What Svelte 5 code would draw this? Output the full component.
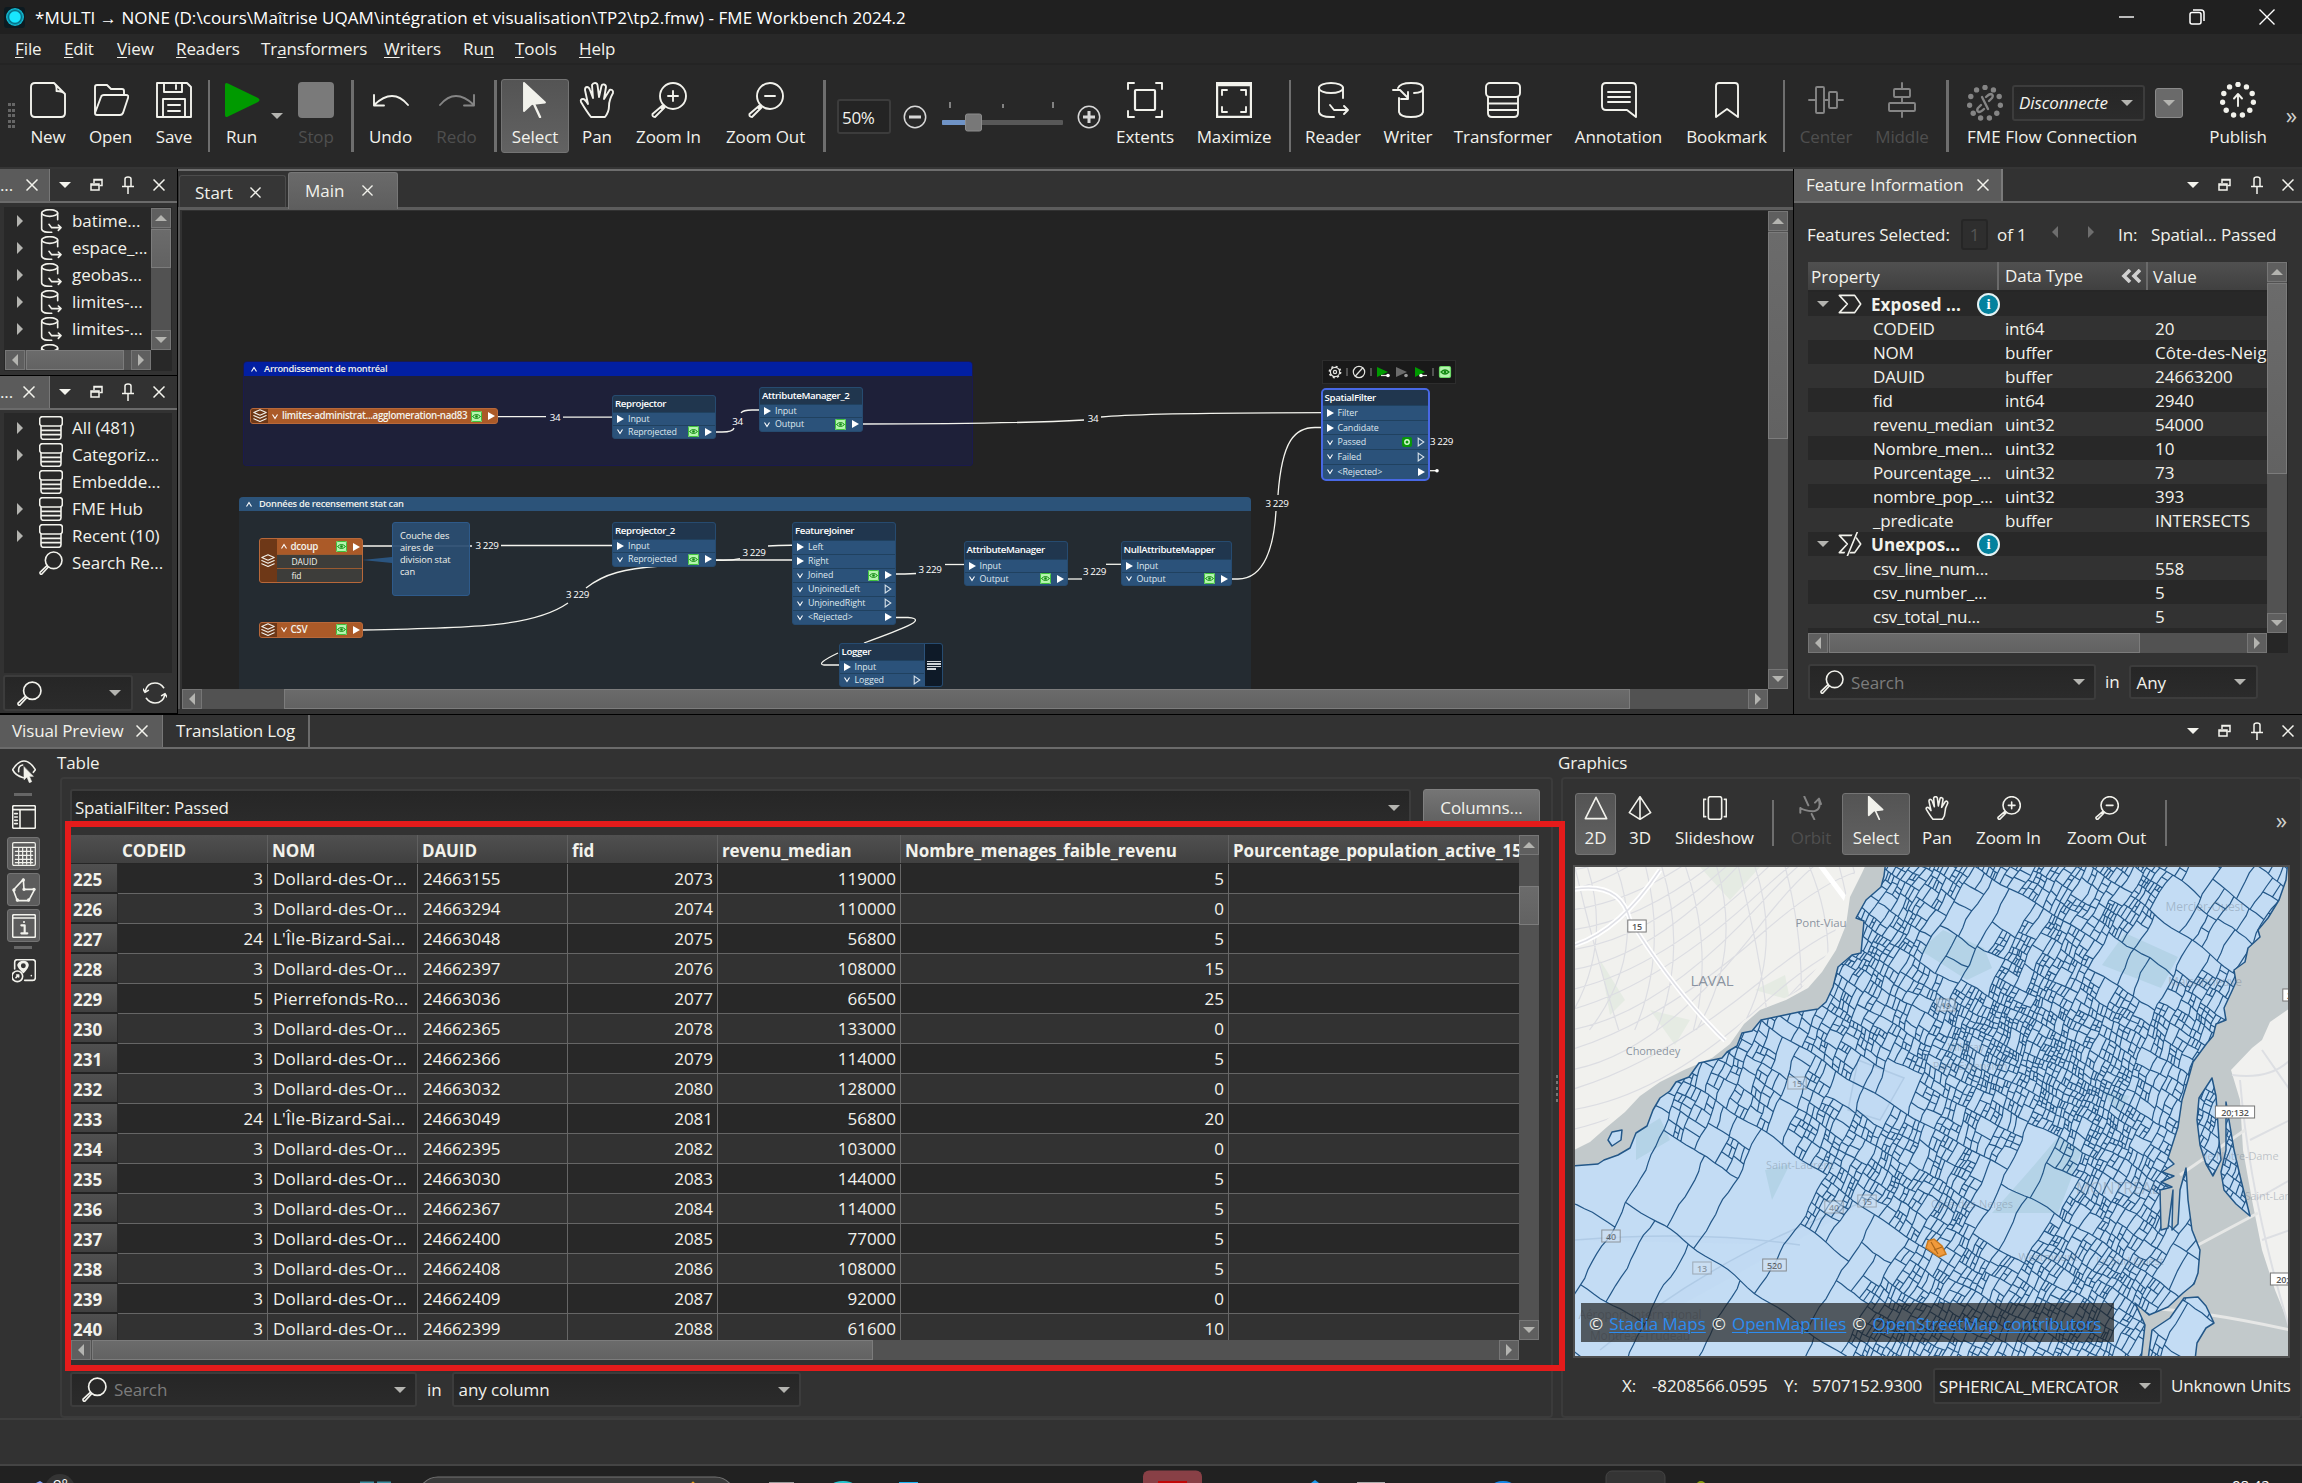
<script lang="ts">
  const menus = [
    ['', 'F', 'ile', 49], ['', 'E', 'dit', 53], ['', 'V', 'iew', 59], ['', 'R', 'eaders', 85],
    ['Tr', 'a', 'nsformers', 123], ['', 'W', 'riters', 79], ['Ru', 'n', '', 52], ['', 'T', 'ools', 64], ['', 'H', 'elp', 60]
  ];

  type Tool = { t: string; l?: string; w: number; cls?: string };
  const toolsA: Tool[] = [
    { t: 'new', l: 'New', w: 56 }, { t: 'open', l: 'Open', w: 69 }, { t: 'save', l: 'Save', w: 58 }, { t: 'sep', w: 12 },
    { t: 'run', l: 'Run', w: 53 }, { t: 'arrow', w: 17 }, { t: 'stop', l: 'Stop', w: 62, cls: 'off' }, { t: 'sep', w: 11 },
    { t: 'undo', l: 'Undo', w: 65 }, { t: 'redo', l: 'Redo', w: 67, cls: 'off' }, { t: 'sep', w: 11 },
    { t: 'select', l: 'Select', w: 68, cls: 'on' }, { t: 'pan', l: 'Pan', w: 56 }, { t: 'zin', l: 'Zoom In', w: 87 },
    { t: 'zout', l: 'Zoom Out', w: 107 }, { t: 'sep', w: 11 }
  ];
  const toolsB: Tool[] = [
    { t: 'extents', l: 'Extents', w: 74 }, { t: 'maximize', l: 'Maximize', w: 104 }, { t: 'sep', w: 8 },
    { t: 'reader', l: 'Reader', w: 78 }, { t: 'writer', l: 'Writer', w: 72 }, { t: 'transformer', l: 'Transformer', w: 118 },
    { t: 'annotation', l: 'Annotation', w: 113 }, { t: 'bookmark', l: 'Bookmark', w: 103 }, { t: 'sep', w: 12 },
    { t: 'center', l: 'Center', w: 72, cls: 'off' }, { t: 'middle', l: 'Middle', w: 80, cls: 'off' }, { t: 'sep', w: 11 }
  ];
  const toolsMap: Tool[] = [
    { t: 'tri2', l: '2D', w: 41, cls: 'on' }, { t: 'tri3', l: '3D', w: 48 }, { t: 'slides', l: 'Slideshow', w: 101 }, { t: 'sep', w: 15 },
    { t: 'orbit', l: 'Orbit', w: 62, cls: 'off' }, { t: 'select', l: 'Select', w: 68, cls: 'on' }, { t: 'pan', l: 'Pan', w: 54 },
    { t: 'zin', l: 'Zoom In', w: 89 }, { t: 'zout', l: 'Zoom Out', w: 107 }, { t: 'sep', w: 12 }
  ];

  const files = ['batime...', 'espace_...', 'geobas...', 'limites-...', 'limites-...', 'limites-...'];
  const gallery = [
    ['All (481)', true], ['Categoriz...', true], ['Embedde...', false], ['FME Hub', true], ['Recent (10)', true]
  ] as [string, boolean][];

  const props = [
    ['h', 'Exposed ...', '', ''], ['', 'CODEID', 'int64', '20'], ['', 'NOM', 'buffer', 'Côte-des-Neiges'],
    ['', 'DAUID', 'buffer', '24663200'], ['', 'fid', 'int64', '2940'], ['', 'revenu_median', 'uint32', '54000'],
    ['', 'Nombre_men...', 'uint32', '10'], ['', 'Pourcentage_...', 'uint32', '73'], ['', 'nombre_pop_...', 'uint32', '393'],
    ['', '_predicate', 'buffer', 'INTERSECTS'], ['x', 'Unexpos...', '', ''], ['', 'csv_line_num...', '', '558'],
    ['', 'csv_number_...', '', '5'], ['', 'csv_total_nu...', '', '5'], ['', '', '', '']
  ];

  const D = 'Dollard-des-Or...', I = "L'Île-Bizard-Sai...", P = 'Pierrefonds-Ro...';
  const rows = [
    [225, 3, D, 24663155, 2073, 119000, 5], [226, 3, D, 24663294, 2074, 110000, 0], [227, 24, I, 24663048, 2075, 56800, 5],
    [228, 3, D, 24662397, 2076, 108000, 15], [229, 5, P, 24663036, 2077, 66500, 25], [230, 3, D, 24662365, 2078, 133000, 0],
    [231, 3, D, 24662366, 2079, 114000, 5], [232, 3, D, 24663032, 2080, 128000, 0], [233, 24, I, 24663049, 2081, 56800, 20],
    [234, 3, D, 24662395, 2082, 103000, 0], [235, 3, D, 24663030, 2083, 144000, 5], [236, 3, D, 24662367, 2084, 114000, 5],
    [237, 3, D, 24662400, 2085, 77000, 5], [238, 3, D, 24662408, 2086, 108000, 5], [239, 3, D, 24662409, 2087, 92000, 0],
    [240, 3, D, 24662399, 2088, 61600, 10]
  ];

  // Workflow nodes. Port kinds: in = input, eye = cached output, out = solid output, open = unconnected output
  type Port = [string, string];
  type Node = { x: number; y: number; w: number; h: number; head: number; name: string; ports: Port[]; sel?: boolean; log?: boolean };
  const nodes: Node[] = [
    { x: 612, y: 394.5, w: 104, h: 44.5, head: 16, name: 'Reprojector', ports: [['Input', 'in'], ['Reprojected', 'eye']] },
    { x: 759, y: 387, w: 104, h: 44.5, head: 16, name: 'AttributeManager_2', ports: [['Input', 'in'], ['Output', 'eye']] },
    { x: 612, y: 522, w: 104, h: 44.5, head: 16, name: 'Reprojector_2', ports: [['Input', 'in'], ['Reprojected', 'eye']] },
    { x: 792, y: 522, w: 104, h: 102.5, head: 17, name: 'FeatureJoiner', ports: [['Left', 'in'], ['Right', 'in'], ['Joined', 'eye'], ['UnjoinedLeft', 'open'], ['UnjoinedRight', 'open'], ['<Rejected>', 'out']] },
    { x: 963.5, y: 541, w: 104, h: 45, head: 16.5, name: 'AttributeManager', ports: [['Input', 'in'], ['Output', 'eye']] },
    { x: 1120.5, y: 541, w: 111, h: 45, head: 16.5, name: 'NullAttributeMapper', ports: [['Input', 'in'], ['Output', 'eye']] },
    { x: 838.5, y: 642.5, w: 104, h: 44.5, head: 16, name: 'Logger', ports: [['Input', 'in'], ['Logged', 'open']], log: true },
    { x: 1320.5, y: 387.5, w: 109.5, h: 93, head: 15.5, name: 'SpatialFilter', ports: [['Filter', 'in'], ['Candidate', 'in'], ['Passed', 'cur'], ['Failed', 'open'], ['<Rejected>', 'out']], sel: true }
  ];
  const wires = [
    'M494 416.7H546', 'M563 417.2H617', 'M711 432H722Q733 432 734 428', 'M741 413Q743 410 752 410H768',
    'M860 424C960 424 1030 423 1084 420', 'M1101 417C1140 413 1240 412.7 1328 412.7',
    'M361 546H472', 'M501 545.5H617', 'M361 630C480 628 535 626 568 603', 'M586 588C605 573 625 569 660 566Q690 560 720 560H800',
    'M714 560Q730 561 740 558.7', 'M768 546Q780 545 800 545.3', 'M893 574Q905 574 916 573.5', 'M945 564.5H970',
    'M1064 579H1082', 'M1106 564.3H1130', 'M1228 579H1238C1265 579 1274 545 1276 511', 'M1278 495C1282 440 1295 427.5 1315 427.5H1328',
    'M893 617.5H908C930 619 900 630 864 643', 'M838 653Q815 664 824 665H845', 'M1421 470.7H1437'
  ];
  const counts = [
    [555, 417.5, '34'], [737.5, 421.7, '34'], [1093, 418.7, '34'], [487, 545.7, '3 229'], [754, 552.7, '3 229'],
    [577.5, 594.7, '3 229'], [930, 569.7, '3 229'], [1094.5, 571.7, '3 229'], [1277, 503.7, '3 229'], [1441.5, 441.7, '3 229']
  ] as [number, number, string][];

  // Street mesh: a skewed lattice split recursively, finer where the city is denser
  let seed = 77;
  const rnd = () => ((seed = (seed * 1103515245 + 12345) & 0x7fffffff) / 0x7fffffff);
  const near = (x: number, y: number, cx: number, cy: number, r: number) => Math.hypot(x - cx, y - cy) < r;
  function grain(x: number, y: number): number {
    if (near(x, y, 2028, 1190, 42)) return 60;
    if (near(x, y, 1960, 945, 36)) return 40;
    if (near(x, y, 2140, 962, 32)) return 48;
    if (near(x, y, 1872, 1090, 30)) return 42;
    if (near(x, y, 1990, 905, 26)) return 32;
    if (near(x, y, 1870, 1240, 34)) return 44;
    if (x < 1790 && y > 1190) return 110;
    if (x < 1720 && y > 1135) return 60;
    if (x < 1840 && y > 1225) return 60;
    if (x > 2165 && y < 970) return 24;
    if (x > 2165 && y > 1200) return 36;
    if (near(x, y, 2000, 1020, 70)) return 7;
    if (near(x, y, 2080, 1080, 65)) return 7.5;
    if (x < 1800) return 13;
    return 9.5;
  }
  const ua = [Math.cos(0.56), Math.sin(0.56)], ub = [Math.cos(-1.12), Math.sin(-1.12)];
  function place(a: number, b: number) {
    const x = 1930 + a * ua[0] + b * ub[0], y = 1110 + a * ua[1] + b * ub[1];
    return [
      x + 7 * Math.sin(y / 57) + 1.3 * Math.sin(a / 13 + b / 9) + 0.5 * Math.sin(b / 2.3),
      y + 6 * Math.sin(x / 71) + 1.2 * Math.sin(b / 14 - a / 11) + 0.5 * Math.sin(a / 2.9)
    ];
  }
  function edge(a0: number, b0: number, a1: number, b1: number) {
    const n = Math.max(1, Math.round(Math.hypot(a1 - a0, b1 - b0) / 9));
    let s = '';
    for (let i = 0; i <= n; i++) {
      const p = place(a0 + ((a1 - a0) * i) / n, b0 + ((b1 - b0) * i) / n);
      s += (i ? 'L' : 'M') + p[0].toFixed(1) + ' ' + p[1].toFixed(1);
    }
    return s;
  }
  let mesh = '';
  function split(a0: number, a1: number, b0: number, b1: number) {
    const [x, y] = place((a0 + a1) / 2, (b0 + b1) / 2);
    const w = a1 - a0, h = b1 - b0, r = w + h;
    if (x + r < 1575 || x - r > 2288 || y + r < 867 || y - r > 1356) return;
    const g = grain(x, y) * (0.6 + rnd() * rnd() * 1.9);
    if (w < g && h < g * 1.5) return;
    const k = 0.38 + rnd() * 0.24;
    if (w * 1.4 > h) {
      const m = a0 + w * k;
      mesh += edge(m, b0, m, b1);
      split(a0, m, b0, b1);
      split(m, a1, b0, b1);
    } else {
      const m = b0 + h * k;
      mesh += edge(a0, m, a1, m);
      split(a0, a1, b0, m);
      split(a0, a1, m, b1);
    }
  }
  split(-560, 560, -520, 520);

  const island = 'M1886 860L1884 876 1881 887 1866 900 1856 918 1864 921 1861 953 1852 955 1838 967 1833 987 1826 1002 1818 1009 1799 1012 1780 1016 1761 1020 1752 1031 1742 1033 1737 1046 1727 1052 1722 1058 1699 1063 1689 1077 1676 1082 1670 1091 1660 1098 1653 1110 1647 1126 1636 1133 1630 1148 1618 1155 1604 1160 1598 1164 1570 1166 1570 1360 2141 1360 2145 1325 2135 1303 2149 1315 2168 1307 2183 1293 2194 1284 2198 1273 2200 1250 2192 1230 2188 1200 2186 1168 2180 1190 2178 1224 2172 1230 2173 1190 2168 1228 2161 1230 2160 1190 2172 1187 2161 1182 2174 1176 2162 1172 2174 1164 2168 1158 2178 1127 2182 1100 2188 1080 2193 1062 2207 1043 2213 1036 2216 1024 2226 1020 2224 1008 2231 993 2236 982 2234 970 2245 962 2248 948 2260 937 2258 930 2268 918 2279 900 2286 880 2288 860Z';
  const isles = 'M2152 1330L2170 1318 2184 1298 2198 1297 2206 1306 2214 1323 2206 1328 2197 1343 2195 1360 2148 1360ZM2212 1078L2216 1096 2219 1140 2221 1160 2213 1176 2206 1164 2200 1145 2197 1120 2199 1098ZM2226 1102L2229 1120 2234 1150 2241 1180 2250 1216 2236 1204 2224 1190 2221 1172 2226 1150ZM1612 1132L1622 1130 1621 1140 1612 1146 1608 1140Z';
  let roads = '';
  for (let i = 0; i < 17; i++) {
    const x = 1560 + i * 24 + rnd() * 14;
    roads += `M${x} 860q${20 + rnd() * 20} 90 ${-30 + rnd() * 80} 170`;
    roads += `M1570 ${850 + i * 20}q90 ${-30 + rnd() * 20} 190 ${-150 + rnd() * 50}t140 -60`;
  }
  const districts = [
    [1821, 927, 'Pont-Viau', 11.5], [1712, 986, 'LAVAL', 15], [1653, 1055, 'Chomedey', 11], [2205, 911, 'Mercier-Ouest', 12],
    [2205, 986, 'Maisonneuve', 12], [1966, 1051, 'Villeray', 11], [1970, 1070, 'Parc-Extension', 11], [1800, 1169, 'Saint-Laurent', 11],
    [2118, 1194, 'MONTRÉAL', 16], [1972, 1208, 'Côte-des-Neiges', 11], [2048, 1261, 'Westmount', 11], [2130, 1265, 'Le Sud-Ouest', 11],
    [2240, 1160, 'Île Notre-Dame', 11], [2280, 1200, 'Saint-Lambert', 11], [1640, 1319, 'Aéroport international', 12], [1640, 1340, 'Montréal-Trudeau', 12]
  ] as [number, number, string, number][];
  const shields = [
    [1637, 926, '15', 1], [1611, 1236, '40', 0.7], [1702, 1268, '13', 0.5], [1774.5, 1265, '520', 0.8], [1834, 1207, '40', 0.5],
    [1867, 1201, '15', 0.5], [1797, 1083, '15', 0.5], [1946, 1005, '19', 0.5], [2235, 1112, '20;132', 1], [2290, 1279, '20;132', 1], [2292, 995, '25', 1]
  ] as [number, number, string, number][];
  const dots = Array.from({ length: 11 }, (_, i) => {
    const t = (i / 11) * Math.PI * 2 - Math.PI / 2;
    return [18 + 15.6 * Math.cos(t), 18 + 15.6 * Math.sin(t)];
  });
</script>

{#snippet icon(name: string, s: number)}
  <svg class="ic" width={s} height={s} viewBox="0 0 36 36" fill="none" stroke="currentColor" stroke-width={s < 30 ? 2.4 : 1.9} stroke-linejoin="round" stroke-linecap="round">
    {#if name === 'new'}
      <path d="M5 1H24L35 12V31Q35 35 31 35H5Q1 35 1 31V5Q1 1 5 1ZM24 1Q27 3 26.500 9Q33 9 35 12" />
    {:else if name === 'open'}
      <path d="M2 31V5Q2 3 4 3H14L18 7H29Q31 7 31 9V13M2 31L8 15Q8.500 13 11 13H33Q36 13 35 16L30 31Q29 33 27 33H4Q2 33 2 31Z" />
    {:else if name === 'save'}
      <path d="M1 1H31L35 5V35H1ZM8 1V10H26V1M20 3V7M7 35V17H29V35M12 23H24M12 29H24" />
    {:else if name === 'run'}
      <path d="M1 3Q1 0 4 1.500L34 16Q37 18 34 20L4 34.500Q1 36 1 33Z" fill="#009a00" stroke="none" />
    {:else if name === 'stop'}
      <rect width="36" height="36" rx="4" fill="#7a7a7a" stroke="none" />
    {:else if name === 'undo'}
      <path d="M35 23Q20 5 1 23M1 13V23.500H11" />
    {:else if name === 'redo'}
      <path d="M1 23Q16 5 35 23M35 13V23.500H25" />
    {:else if name === 'select'}
      <path d="M7 1V29L14.500 22L28 20.500Z" fill="currentColor" /><path d="M17 22L23 35" stroke-width="2.400" />
    {:else if name === 'pan'}
      <path d="M12 35Q8 30 2 20Q1 17 4 17Q6 17 9 22L6 8Q6 5 8 5Q10 5 11 8L14 16L13 3Q14 1 16 1Q18 1 18.500 3L20 15L22.500 4Q23 2 25 2.500Q27 3 27 5L25 17L30 9Q31 7 33 8Q34.500 9 34 11Q30 18 30 24Q30 30 26 35Z" />
    {:else if name === 'zin' || name === 'zout'}
      <circle cx="22" cy="14" r="13" /><path d="M13 23.500L10.500 26M11.500 23.500L1.500 32Q1 35 4 35L13.500 25.500M17 14H27" />
      {#if name === 'zin'}<path d="M22 9V19" />{/if}
    {:else if name === 'find'}
      <circle cx="22" cy="14" r="12.500" /><path d="M12 22L1.500 32Q1 35 4 35L14 24" />
    {:else if name === 'extents'}
      <rect x="8" y="8" width="20" height="20" rx="1" stroke-width="2.200" /><path d="M1 7V1H7M29 1H35V7M35 29V35H29M7 35H1V29" />
    {:else if name === 'maximize'}
      <path d="M1 1H35V35H1Z M1 3H35" stroke-width="2.400" /><path d="M6 13V8H11M25 8H30V13M30 25V30H25M11 30H6V25" />
    {:else if name === 'reader'}
      <ellipse cx="16" cy="6" rx="12" ry="5" /><path d="M4 6V30Q5 35 16 35H19M28 6V16M15 23L19 28H33M29 24L33 28L29 32" />
    {:else if name === 'writer'}
      <path d="M8 6Q10 1 21 1Q33 1 33 6Q33 11 24 11M9 16V30Q10 35 21 35Q32 35 33 30V6M3 8H10L18 16M18 10V17H11" />
    {:else if name === 'transformer'}
      <rect x="1" y="1" width="34" height="14" rx="4" /><path d="M3 15V31Q3 35 7 35H29Q33 35 33 31V15M3 21.500H33M3 28H33" />
    {:else if name === 'annotation'}
      <path d="M5 1H31Q35 1 35 5V35L26 28H5Q1 28 1 24V5Q1 1 5 1ZM7 10H29M7 15H29M7 20H29" />
    {:else if name === 'bookmark'}
      <path d="M7 35V4Q7 1 10 1H26Q29 1 29 4V35L18 27Z" />
    {:else if name === 'center'}
      <path d="M1 18H8M16 18H21M29 18H35" /><rect x="8" y="5" width="8" height="26" rx="1" /><rect x="21" y="10" width="8" height="16" rx="1" />
    {:else if name === 'middle'}
      <path d="M18 1V7M18 15V21M18 29V35" /><rect x="10" y="7" width="16" height="8" rx="1" /><rect x="5" y="21" width="26" height="8" rx="1" />
    {:else if name === 'flow' || name === 'publish'}
      {#each dots as d}<circle cx={d[0]} cy={d[1]} r="2.700" fill="currentColor" stroke="none" />{/each}
      {#if name === 'publish'}<path d="M18 24V13M14 16.500L18 12L22 16.500" />
      {:else}<path d="M14 20L11 23Q9 26 12 27Q14 27 17 24M22 16L25 13Q27 10 24 9Q22 9 19 12M15 12L21 24" stroke-width="2.400" />{/if}
    {:else if name === 'tri2'}
      <path d="M18 2L34 34H2Z" />
    {:else if name === 'tri3'}
      <path d="M18 1L34 25L18 35L2 25ZM18 1V35" />
    {:else if name === 'slides'}
      <rect x="8" y="1" width="20" height="34" rx="3" /><path d="M4 5H1V31H4M32 5H35V31H32" />
    {:else if name === 'orbit'}
      <path d="M8 1L14 14M19 27L23 35M30 6Q34 22 20 23Q8 22 2 18M24 10L30 4L33 12M2 18V25" stroke-width="3" />
    {:else if name === 'refresh'}
      <path d="M3 16Q6 3 18 3Q26 3 31 10M33 20Q30 33 18 33Q10 33 5 26M0 12L3 17L8 14M36 24L33 19L28 22" />
    {:else if name === 'eyecur'}
      <path d="M17 28Q5 25 1 16Q9 3 18 3Q27 3 35 16L32 20M10 19Q9 10 16 9" /><path d="M18 12V31L22.500 27L26 35.500L29.500 34L26 26H31.500Z" fill="currentColor" stroke-width="1" />
    {:else if name === 'window'}
      <path d="M3 1H33Q35 1 35 3V33Q35 35 33 35H3Q1 35 1 33V3Q1 1 3 1ZM1 7H35M12 7V35M4 13H8M4 18H8M4 23H8M4 28H8" />
    {:else if name === 'grid'}
      <path d="M3 1H33Q35 1 35 3V33Q35 35 33 35H3Q1 35 1 33V3Q1 1 3 1ZM1 8H35M5 14H31M5 20H31M5 26H31M5 31H31M10 8V33M16 8V33M22 8V33M28 8V33" stroke-width="1.800" />
    {:else if name === 'poly'}
      <path d="M17 2L2 18L8 34H25L34 17L18 17Z" /><path d="M17 3v0M3 18v0M8 33v0M25 33v0M33 17v0M18 17v0" stroke-width="5" />
    {:else if name === 'info'}
      <path d="M3 1H33Q35 1 35 3V33Q35 35 33 35H3Q1 35 1 33V3Q1 1 3 1ZM1 6H35" /><path d="M14 17H19V29M14 29H23M18 12v0" stroke-width="3.200" />
    {:else if name === 'mapset'}
      <path d="M4 15V5Q4 1 8 1H31Q35 1 35 5V28Q35 32 31 32H19M29 25v0" /><path d="M17 20Q9 12 9 9Q11 4 17 4Q23 4 24 9Q24 13 17 20Z" fill="currentColor" /><circle cx="17" cy="10" r="2.500" fill="#323232" stroke="#323232" /><circle cx="8" cy="26" r="8" /><path d="M6 28L10 24M7 24H10V27" />
    {:else if name === 'exposed' || name === 'unexposed'}
      <path d="M2 5H25L34 18L25 31H2L14 18Z" />
      {#if name === 'unexposed'}<path d="M27 0L12 36" stroke="#282828" stroke-width="7" /><path d="M29 0L14 36" />{/if}
    {:else if name === 'layers'}
      <path d="M18 2L34 9L18 16L2 9ZM2 17L18 24L34 17M2 25L18 32L34 25" stroke-width="2.800" />
    {/if}
  </svg>
{/snippet}

{#snippet x(s = 12)}
  <svg class="ic" width={s} height={s} viewBox="0 0 12 12" stroke="currentColor" stroke-width="1.500"><path d="M.5 .5L11.500 11.500M11.500 .5L.5 11.500" /></svg>
{/snippet}

{#snippet dockIcons()}
  <div class="dock">
    <i class="dn bright"></i>
    <svg width="13" height="13" viewBox="0 0 13 13" fill="none" stroke="#f4f4ee" stroke-width="1.500"><path d="M4 5V1.500H12V7.500H9.500M4 2H12" /><rect x="1" y="6" width="8" height="6" /><path d="M1 7H9" /></svg>
    <svg width="12" height="18" viewBox="0 0 12 18" fill="none" stroke="#f4f4ee" stroke-width="1.500"><path d="M3 10V3Q3 1 6 1Q9 1 9 3V10M0 10.500H12M6 10V18" /></svg>
    {@render x(12)}
  </div>
{/snippet}

{#snippet tool(b: Tool, s: number)}
  {#if b.t === 'sep'}
    <div class="tsep" style="width:{b.w}px"><i></i></div>
  {:else if b.t === 'arrow'}
    <div class="tarrow" style="width:{b.w}px"><i class="dn"></i></div>
  {:else}
    <div class="tool {b.cls ?? ''}" style="width:{b.w}px">
      {@render icon(b.t, s)}
      <span>{b.l}</span>
    </div>
  {/if}
{/snippet}

{#snippet hbar(before: number, thumb: number)}
  <div class="hbar">
    <div class="sbtn"><i class="lf"></i></div>
    <div class="track"><div class="thumb" style="margin-left:{before}px;width:{thumb}px"></div></div>
    <div class="sbtn"><i class="rt"></i></div>
  </div>
{/snippet}
{#snippet vbar(before: number, thumb: number)}
  <div class="vbar">
    <div class="sbtn"><i class="up"></i></div>
    <div class="track"><div class="thumb" style="margin-top:{before}px;height:{thumb}px"></div></div>
    <div class="sbtn"><i class="dn"></i></div>
  </div>
{/snippet}

{#snippet eye()}
  <svg class="eye" width="11" height="11" viewBox="0 0 11 11"><rect width="11" height="11" rx="1.500" fill="#b4f5ae" /><rect x=".5" y=".5" width="10" height="10" rx="1.200" fill="none" stroke="#3fc23c" /><path d="M1.500 5.500Q5.500 1.500 9.500 5.500Q5.500 9.500 1.500 5.500Z" fill="none" stroke="#128a12" /><circle cx="5.500" cy="5.500" r="1.300" fill="#128a12" /></svg>
{/snippet}
{#snippet chev(up = false)}
  <svg class="chev" width="6" height="7" viewBox="0 0 6 7" fill="none" stroke="#fff" stroke-width="1.100"><path d={up ? 'M.5 5.500L3 1.500L5.500 5.500' : 'M.5 1.500L3 5.500L5.500 1.500'} /></svg>
{/snippet}

<div class="app">
  <header class="title">
    <span class="logo"><i></i></span>
    <span class="caption">*MULTI → NONE (D:\cours\Maîtrise UQAM\intégration et visualisation\TP2\tp2.fmw) - FME Workbench 2024.2</span>
    <div class="winbtns">
      <svg width="16" height="16" viewBox="0 0 16 16" stroke="#fff" fill="none" stroke-width="1.400"><path d="M0 8H15" /></svg>
      <svg width="16" height="16" viewBox="0 0 16 16" stroke="#fff" fill="none" stroke-width="1.500"><rect x="1" y="3.500" width="11" height="11.500" rx="2" /><path d="M4 1H12Q15 1 15 4V12" /></svg>
      <svg width="16" height="16" viewBox="0 0 16 16" stroke="#fff" fill="none" stroke-width="1.400"><path d="M.5 .5L15.500 15.500M15.500 .5L.5 15.500" /></svg>
    </div>
  </header>
  <nav class="menu">
    {#each menus as m}<span style="width:{m[3]}px">{m[0]}<u>{m[1]}</u>{m[2]}</span>{/each}
  </nav>

  <div class="toolbar">
    <div class="grip"></div>
    {#each toolsA as b}{@render tool(b, 36)}{/each}
    <div class="zoom">
      <div class="pct">50%</div>
      <svg class="zm" width="24" height="24" viewBox="0 0 24 24" fill="none" stroke="#d8d8d8" stroke-width="1.500"><circle cx="12" cy="12" r="10.700" /><path d="M6 12H18" stroke-width="3" /></svg>
      <svg width="122" height="36" viewBox="0 0 122 36">
        <path d="M8 2V8M61 4V8M111 2V8" stroke="#a0a0a0" stroke-width="1.500" />
        <rect x="0" y="20" width="121" height="5" rx="1" fill="#585858" /><rect x="0" y="20" width="24" height="5" rx="1" fill="#6f93c6" />
        <rect x="23.500" y="14" width="16" height="17" rx="2" fill="#787878" stroke="#8c8c8c" />
      </svg>
      <svg class="zp" width="24" height="24" viewBox="0 0 24 24" fill="none" stroke="#d8d8d8" stroke-width="1.500"><circle cx="12" cy="12" r="10.700" /><path d="M6 12H18M12 6V18" stroke-width="3" /></svg>
    </div>
    {#each toolsB as b}{@render tool(b, 36)}{/each}
    <div class="flowbox">
      <div class="flowtop">
        <span class="dim">{@render icon('flow', 36)}</span>
        <div class="combo disc"><em>Disconnecte</em><i class="dn"></i></div>
        <div class="mini"><i class="dn"></i></div>
      </div>
      <span>FME Flow Connection</span>
    </div>
    {@render tool({ t: 'publish', l: 'Publish', w: 86 }, 36)}
    <div class="more">»</div>
  </div>

  <main class="work">
    <aside class="left">
      <section class="pane p1">
        <div class="phead"><div class="ptab w50"><b class="el">...</b>{@render x(12)}</div>{@render dockIcons()}</div>
        <div class="tree files">
          <div class="treebody">
            <ul>
              {#each files as f}<li><i class="rt"></i>{@render icon('reader', 24)}<span>{f}</span></li>{/each}
            </ul>
            {@render vbar(1, 39)}
          </div>
          <div class="hrow">{@render hbar(1, 98)}</div>
        </div>
      </section>
      <section class="pane p2">
        <div class="phead"><div class="ptab w50"><b class="el">...</b>{@render x(12)}</div>{@render dockIcons()}</div>
        <div class="tree gal">
          <ul>
            {#each gallery as g}<li><i class="rt" class:hide={!g[1]}></i>{@render icon('transformer', 24)}<span>{g[0]}</span></li>{/each}
            <li><i class="rt hide"></i>{@render icon('find', 24)}<span>Search Re...</span></li>
          </ul>
        </div>
        <div class="srow">
          <div class="combo s1">{@render icon('find', 25)}<i class="dn"></i></div>
          {@render icon('refresh', 24)}
        </div>
      </section>
    </aside>

    <section class="center">
      <div class="tabs">
        <div class="tab">Start {@render x(11)}</div>
        <div class="tab main">Main {@render x(11)}</div>
      </div>
      <div class="canvasbox">
        <div class="canvas">
          <div class="bm blue"><div>{@render chev(true)}Arrondissement de montréal</div></div>
          <div class="bm steel"><div>{@render chev(true)}Données de recensement stat can</div></div>
          <svg class="wires" viewBox="182 211 1586 478" width="1586" height="478" fill="none" stroke="#f4f4ee" stroke-width="1.300">
            {#each wires as d}<path {d} />{/each}
            <circle cx="1437" cy="470.700" r="1.800" fill="#fff" stroke="none" />
          </svg>
          <div class="note">Couche des aires de division stat can</div>
          <svg class="wires" viewBox="182 211 1586 478" width="1586" height="478"><path d="M362 560L392 557V563Z" fill="#2b5580" /></svg>

          <div class="src wide"><div class="lay">{@render icon('layers', 14)}</div><div class="srow1">{@render chev()}<b>limites-administrat...agglomeration-nad83</b>{@render eye()}<i class="pt"></i></div></div>
          <div class="src dcoup">
            <div class="lay">{@render icon('layers', 14)}</div>
            <div class="scol">
              <div class="srow1">{@render chev(true)}<b>dcoup</b>{@render eye()}<i class="pt"></i></div>
              <div class="attr">DAUID</div>
              <div class="attr">fid</div>
            </div>
          </div>
          <div class="src csv"><div class="lay">{@render icon('layers', 14)}</div><div class="srow1">{@render chev()}<b>CSV</b>{@render eye()}<i class="pt"></i></div></div>

          {#each nodes as n}
            <div class="node" class:sel={n.sel} class:logn={n.log} style="left:{n.x - 182}px;top:{n.y - 211}px;width:{n.w}px;height:{n.h}px">
              <div class="nh" style="height:{n.head}px">{n.name}</div>
              {#each n.ports as p}
                <div class="np">
                  {#if p[1] === 'in'}<i class="pt"></i>{:else}{@render chev()}{/if}
                  <span>{p[0]}</span>
                  {#if p[1] === 'eye'}{@render eye()}{/if}
                  {#if p[1] === 'cur'}<svg class="eye" width="10" height="10" viewBox="0 0 10 10"><rect width="10" height="10" rx="2" fill="#0a970a" /><circle cx="5" cy="5" r="2.200" stroke="#d8ffd0" stroke-width="1.400" fill="none" /></svg>{/if}
                  {#if p[1] === 'eye' || p[1] === 'out'}<i class="pt"></i>{/if}
                  {#if p[1] === 'open' || p[1] === 'cur'}<svg width="8" height="10" viewBox="0 0 7 9" fill="none" stroke="#d8e2ea"><path d="M1 1L6 4.500L1 8Z" /></svg>{/if}
                </div>
              {/each}
              {#if n.log}<div class="logside"><i></i><i></i><i></i><i></i></div>{/if}
            </div>
          {/each}

          <div class="nodebar">
            <svg width="126" height="16" viewBox="0 0 126 16" fill="none" stroke="#e4e4e0" stroke-width="1.200">
              <circle cx="8" cy="8" r="4.600" /><circle cx="8" cy="8" r="5.600" stroke-width="1.600" stroke-dasharray="2 2.400" /><circle cx="8" cy="8" r="1.600" />
              <path d="M20 4V12M44 4V12M106 4V12" stroke="#777" />
              <circle cx="32" cy="8" r="5.700" /><path d="M28 12.500L36 3.500" />
              <path d="M50 3L61 8L50 13Z" fill="#009a00" stroke="none" /><path d="M54 11.500H61" /><circle cx="61" cy="11.500" r="1.800" fill="#fff" stroke="none" />
              <path d="M69 3L80 8L69 13Z" fill="#6b6b6b" stroke="none" /><circle cx="79" cy="11.500" r="1.800" fill="#999" stroke="none" />
              <path d="M88 3L98 8L88 13Z" fill="#009a00" stroke="none" /><path d="M93 11.500H100" /><circle cx="94" cy="11.500" r="1.800" fill="#fff" stroke="none" />
              <rect x="112.500" y="2.500" width="11" height="11" rx="1.500" fill="#b4f5ae" stroke="#6bd866" /><path d="M114 8Q118 4 122 8Q118 12 114 8Z" stroke="#128a12" /><circle cx="118" cy="8" r="1.300" fill="#128a12" stroke="none" />
            </svg>
          </div>
          {#each counts as c}<span class="cnt" style="left:{c[0] - 182}px;top:{c[1] - 211}px">{c[2]}</span>{/each}
        </div>
        {@render vbar(1, 207)}
        <div class="hrow">{@render hbar(82, 1346)}</div>
      </div>
    </section>

    <aside class="right pane">
      <div class="phead"><div class="ptab fi"><span>Feature Information</span>{@render x(12)}</div>{@render dockIcons()}</div>
      <div class="selrow">
        <span class="s-a">Features Selected:</span><span class="one">1</span><span class="s-b">of 1</span>
        <i class="lf"></i><i class="rt"></i><span class="s-c">In:</span><span>Spatial... Passed</span>
      </div>
      <div class="ptable">
        <div class="pt-main">
          <div class="prow head"><span class="c1">Property</span><span class="c2">Data Type<svg width="20" height="14" viewBox="0 0 20 14" fill="none" stroke="#d0d0d0" stroke-width="3.600"><path d="M9 1L3 7L9 13M19 1L13 7L19 13" /></svg></span><span class="c3">Value</span></div>
          <div class="pbody">
            {#each props as p, i}
              {#if p[0]}
                <div class="prow grp" class:alt={i % 2 === 1}><i class="dn"></i>{@render icon(p[0] === 'h' ? 'exposed' : 'unexposed', 24)}<b>{p[1]}</b><span class="inf">i</span></div>
              {:else}
                <div class="prow" class:alt={i % 2 === 1}><span class="c1">{p[1]}</span><span class="c2">{p[2]}</span><span class="c3">{p[3]}</span></div>
              {/if}
            {/each}
          </div>
        </div>
        {@render vbar(1, 191)}
        <div class="hrow">{@render hbar(1, 311)}</div>
      </div>
      <div class="fsearch">
        <div class="combo f1">{@render icon('find', 24)}<span class="ph">Search</span><i class="dn"></i></div>
        <span>in</span>
        <div class="combo f2"><span>Any</span><i class="dn"></i></div>
      </div>
    </aside>
  </main>

  <div class="phead low"><div class="ptab vp"><span>Visual Preview</span>{@render x(12)}</div><div class="tl">Translation Log</div>{@render dockIcons()}</div>

  <div class="preview">
    <div class="side">
      <div class="si a">{@render icon('eyecur', 24)}</div>
      <hr />
      <div class="si b">{@render icon('window', 24)}</div>
      <div class="si sel">{@render icon('grid', 24)}</div>
      <div class="si sel">{@render icon('poly', 24)}</div>
      <div class="si sel">{@render icon('info', 24)}</div>
      <hr class="h2" />
      <div class="si c">{@render icon('mapset', 24)}</div>
    </div>

    <section class="tcol">
      <div class="lbl">Table</div>
      <div class="group tgroup">
        <div class="trow1">
          <div class="combo src1"><span>SpatialFilter: Passed</span><i class="dn"></i></div>
          <div class="btn">Columns...</div>
        </div>
        <div class="grid">
          <div class="gmain">
            <div class="gr gh"><span></span><span>CODEID</span><span>NOM</span><span>DAUID</span><span>fid</span><span>revenu_median</span><span>Nombre_menages_faible_revenu</span><span>Pourcentage_population_active_15</span></div>
            <div class="gbody">
              {#each rows as r, i}
                <div class="gr" class:alt={i % 2 === 1}>
                  <span class="rh">{r[0]}</span><span class="n">{r[1]}</span><span class="nom">{r[2]}</span><span>{r[3]}</span><span class="n">{r[4]}</span><span class="n">{r[5]}</span><span class="n">{r[6]}</span><span></span>
                </div>
              {/each}
            </div>
          </div>
          {@render vbar(31, 39)}
          <div class="hrow">{@render hbar(1, 781)}</div>
        </div>
        <div class="tsearch">
          <div class="combo g1">{@render icon('find', 25)}<span class="ph">Search</span><i class="dn"></i></div>
          <span>in</span>
          <div class="combo g2"><span>any column</span><i class="dn"></i></div>
        </div>
      </div>
    </section>
    <div class="split"></div>

    <section class="gcol">
      <div class="lbl">Graphics</div>
      <div class="group ggroup">
        <div class="mtools">
          {#each toolsMap as b}{@render tool(b, 24)}{/each}
          <div class="more">»</div>
        </div>
        <div class="map">
          <svg viewBox="1575 867 713 489" width="713" height="489">
            <defs><clipPath id="land"><path d={island + isles} /></clipPath></defs>
            <rect x="1575" y="867" width="713" height="489" fill="#c2c9cb" />
            <path d="M1570 860H1868L1862 873 1850 897 1846 925 1836 950 1822 972 1808 988 1786 1000 1760 1010 1744 1024 1730 1044 1712 1058 1684 1070 1660 1082 1640 1096 1625 1112 1607 1127 1590 1142 1570 1152Z" fill="#f1f1ee" />
            <clipPath id="lav"><path d="M1570 860H1860L1845 897 1830 950 1800 990 1744 1020 1712 1055 1640 1094 1570 1148Z" /></clipPath>
            <g clip-path="url(#lav)">
              <path d="M1700 867H1760L1730 900ZM1600 960L1625 1000 1610 1015ZM1650 1010L1690 1020 1675 1045ZM1755 990L1785 975 1790 1000Z" fill="#e5ebe3" />
              <path d={roads} fill="none" stroke="#dcdde2" stroke-width="1.200" />
              <path d="M1570 890Q1620 880 1630 920Q1680 1000 1735 1050M1575 945Q1620 930 1660 870M1820 865L1850 905" fill="none" stroke="#fff" stroke-width="5" />
              <path d="M1570 890Q1620 880 1630 920Q1680 1000 1735 1050M1575 945Q1620 930 1660 870" fill="none" stroke="#dfe0e6" stroke-width="1.500" />
            </g>
            <path d="M2290 1008L2270 1022 2262 1040 2252 1048 2231 1070 2240 1100 2243 1150 2252 1200 2262 1250 2275 1290 2290 1327Z" fill="#f1f1ef" />
            <path d="M2240 1080Q2250 1200 2290 1330M2232 1075Q2270 1080 2290 1060M2250 1140L2290 1120M2255 1200L2290 1180M2262 1240L2290 1230M2262 1050L2290 1090" fill="none" stroke="#dddfe3" stroke-width="2" />
            <path d="M2140 1308Q2200 1310 2290 1330M2198 1245L2258 1213M2180 1175L2245 1130" fill="none" stroke="#e6e7e6" stroke-width="3" />
            <path d={island + isles} fill="#c3dcf4" />
            <path d="M2125 933L2178 957 2161 988 2102 965ZM1920 950L1943 930 1984 948 1992 968 1967 980ZM2058 1137L2082 1150 2058 1213 1992 1213 2030 1170ZM1765 1170L1790 1164 1772 1200ZM2100 1090L2130 1096 2118 1112ZM1636 1133L1660 1118 1670 1140 1636 1160Z" fill="#b4d3e7" />
            <path d="M1858 1060L1904 1078 1880 1120 1848 1110ZM1575 1240Q1700 1230 1800 1245M1600 1350Q1720 1250 1870 1200" fill="#bcd7f1" stroke="#b0cbe6" stroke-width="1.500" fill-opacity=".3" />
            <g clip-path="url(#land)"><path d={mesh} fill="none" stroke="#235788" stroke-width="1.200" /></g>
            <path d={island + isles} fill="none" stroke="#235788" stroke-width="1.500" stroke-linejoin="round" />
            <path d="M1928 1241L1934 1239 1942 1246 1946 1254 1939 1257 1926 1248Z" fill="#f09a3c" stroke="#c97a20" stroke-width="1.500" />
            <path d="M1931 1242L1938 1254M1934 1250L1942 1247" stroke="#a8651a" stroke-width="1.200" />
            {#each districts as d}<text x={d[0]} y={d[1]} font-size={d[3]} text-anchor="middle" fill="#707c8c" fill-opacity={d[0] < 1830 && d[1] < 1060 ? 0.8 : 0.4}>{d[2]}</text>{/each}
            {#each shields as s}
              <g opacity={s[3]}>
                <rect x={s[0] - 4 - s[2].length * 2.600} y={s[1] - 6} width={8 + s[2].length * 5.200} height="12" fill={s[3] === 1 ? '#fff' : '#cfe0f2'} stroke="#777" />
                <text x={s[0]} y={s[1] + 3.500} font-size="9" font-weight="600" text-anchor="middle" fill="#555">{s[2]}</text>
              </g>
            {/each}
          </svg>
          <div class="credit"><span>©</span><u>Stadia Maps</u><span>©</span><u>OpenMapTiles</u><span>©</span><u>OpenStreetMap contributors</u></div>
        </div>
        <div class="coords">
          <span class="cx">X:</span><span class="cxv">-8208566.0595</span><span class="cy">Y:</span><span class="cyv">5707152.9300</span>
          <div class="combo merc"><span>SPHERICAL_MERCATOR</span><i class="dn"></i></div>
          <span class="uu">Unknown Units</span>
        </div>
      </div>
    </section>
    <div class="highlight"></div>
  </div>

  <div class="status"></div>
  <footer class="taskbar">
    <svg viewBox="0 1466 2302 17" width="2302" height="17">
      <circle cx="60" cy="1489" r="15" fill="#343434" /><text x="53" y="1490" font-size="15" fill="#fff">9°</text>
      <path d="M36 1483L40 1481L43 1483Z" fill="#88a8ff" />
      <path d="M360 1481.500H374V1483H360ZM377 1481.500H391V1483H377Z" fill="#3d8ea0" />
      <rect x="418" y="1477" width="317" height="40" rx="20" fill="#3a3a3a" stroke="#757575" stroke-width="1.200" />
      <circle cx="693" cy="1483" r="1.500" fill="#e8a020" />
      <rect x="769" y="1482" width="25" height="3" fill="#999" /><ellipse cx="843" cy="1484" rx="10" ry="3" fill="#28c6d0" />
      <rect x="899" y="1482" width="19" height="3" fill="#1cb4f4" />
      <rect x="1143" y="1470.500" width="59" height="30" rx="6" fill="#884046" /><rect x="1158" y="1481" width="29" height="4" fill="#c00808" />
      <path d="M1311 1483L1315 1480L1319 1483Z" fill="#1f9cf0" /><path d="M1357 1482H1385V1484H1357Z" fill="#aaa" /><ellipse cx="1503" cy="1485" rx="10" ry="4" fill="#1688e8" />
      <rect x="1606" y="1471" width="59" height="30" rx="6" fill="#343434" stroke="#444" /><circle cx="1701" cy="1486" r="5" fill="#8a9c10" />
      <text x="2002" y="1493" font-size="15" fill="#fff">FRA</text><text x="2232" y="1491" font-size="15" fill="#fff">08:42</text>
    </svg>
  </footer>
</div>

<style>
  :global(body) { background: #323232; }
  .app, .app * { box-sizing: border-box; }
  .app { width: 2302px; height: 1483px; overflow: hidden; display: flex; flex-direction: column; background: #323232; color: #f2f2ec; font: 17px/24px 'Open Sans', 'Noto Sans', sans-serif; letter-spacing: -.1px; white-space: nowrap; }
  .ic { display: block; flex: none; }
  ul { list-style: none; margin: 0; padding: 0; }

  /* small triangles */
  .up, .dn, .lf, .rt { display: block; flex: none; width: 0; height: 0; border: 6px solid transparent; }
  .dn { border-top-color: #b4b4b0; border-bottom: 0; }
  .dn.bright { border-top-color: #f4f4ee; }
  .up { border-bottom-color: #b4b4b0; border-top: 0; }
  .lf { border-right-color: #b4b4b0; border-left: 0; }
  .rt { border-left-color: #b4b4b0; border-right: 0; }
  .hide { visibility: hidden; }

  .title { flex: none; height: 34px; background: #202020; display: flex; align-items: center; padding-left: 4px; }
  .logo { width: 21px; height: 21px; background: #0c1a20; display: grid; place-items: center; border-radius: 3px; }
  .logo i { width: 18px; height: 18px; border-radius: 50%; background: radial-gradient(#18e6ff 0 40%, #066a80 50%, #12bcd4 65%, #055868 90%); }
  .caption { margin-left: 10px; flex: 1; color: #fff; padding-top: 1px; letter-spacing: .06px; }
  .winbtns { display: flex; gap: 54px; padding-right: 27px; }
  .menu { flex: none; height: 31px; background: #282828; border-bottom: 2px solid #242424; display: flex; align-items: center; padding: 1px 0 0 15px; }
  .menu span { display: block; }
  u { text-underline-offset: 2px; text-decoration-thickness: 1px; }

  .toolbar { flex: none; height: 104px; background: #282828; border-bottom: 2px solid #353535; display: flex; align-items: flex-start; padding-top: 14px; }
  .grip { flex: none; width: 20px; height: 27px; margin-top: 24px; background: repeating-linear-gradient(#666 0 3px, transparent 3px 5.5px) 8px 0 / 3px 27px no-repeat, repeating-linear-gradient(#666 0 3px, transparent 3px 5.5px) 12px 0 / 3px 27px no-repeat; }
  .tool { flex: none; height: 74px; display: flex; flex-direction: column; align-items: center; padding-top: 2px; border: 1px solid transparent; }
  .tool span { margin-top: 7px; }
  .tool.off { color: #858585; }
  .tool.off span { color: #4f4f4f; }
  .tool.on { background: linear-gradient(#545454, #626262); border-color: #747474; border-radius: 3px; }
  .tsep { flex: none; height: 74px; display: flex; justify-content: center; padding: 1px 0; }
  .tsep i { width: 2.500px; background: #6e6e6e; }
  .tarrow { flex: none; display: flex; justify-content: center; padding-top: 34px; }
  .zoom { flex: none; width: 278px; height: 74px; display: flex; align-items: flex-start; padding: 20px 0 0 7px; }
  .pct { width: 54px; height: 35px; border: 2px solid #3c3c3c; border-radius: 3px; background: #242424; line-height: 33px; padding-left: 3px; letter-spacing: -.3px; }
  .zm { margin: 6px 15px 0 12px; }
  .zoom svg:nth-of-type(2) { margin-top: 1px; }
  .zp { margin: 6px 0 0 13px; }
  .flowbox { flex: none; width: 242px; padding: 6px 0 0 14px; }
  .flowtop { display: flex; height: 36px; align-items: center; margin-bottom: 4px; }
  .flowbox > span { letter-spacing: .05px; }
  .dim { color: #858585; }
  .disc { width: 133px; height: 36px; margin: 0 10px 0 9px; padding: 0 10px 0 5px; }
  .mini { width: 28px; height: 30px; border: 1px solid #8a8a8a; border-radius: 3px; background: #6a6a6a; display: grid; place-items: center; }
  .more { flex: 1; font-size: 23px; line-height: 30px; padding-top: 21px; text-align: center; color: #d0d0cc; }

  .combo { flex: none; display: flex; align-items: center; justify-content: space-between; background: linear-gradient(#262626, #2b2b2b); border: 2px solid #3c3c3c; border-radius: 3px; }
  .combo span { padding-top: 1px; }
  .ph { color: #7c7c7c; flex: 1; margin-left: 7px; }

  .work { flex: none; height: 546px; display: grid; grid-template-columns: 177px 1615px 508px; column-gap: 1px; background: #000; border-bottom: 1px solid #000; }
  .pane { background: #323232; overflow: hidden; }
  .left { display: grid; grid-template-rows: 206px 337px; row-gap: 1px; min-width: 0; }
  .phead { height: 34px; border-bottom: 2px solid #6b6b6b; display: flex; background: #323232; }
  .ptab { background: #5b5b5b; display: flex; align-items: center; }
  .w50 { width: 50px; border-right: 1px solid #777; justify-content: space-between; padding: 0 11px 0 0; }
  .p2 .w50 { padding-right: 14px; }
  .el { font-weight: 400; }
  .dock { margin-left: auto; display: flex; align-items: center; gap: 19.500px; padding: 0 8px 1px 0; color: #f4f4ee; }
  .left .dock { padding-right: 12px; gap: 19px; }
  .tree { margin: 4px 5px 0 4px; border: 1px solid #282828; background: #282828; overflow: hidden; }
  .files { height: 164px; }
  .treebody { display: flex; height: 142px; overflow: hidden; }
  .files ul { flex: 1; overflow: hidden; }
  .files .hrow { width: 146px; height: 20px; }
  .files ul { margin-top: -1px; }
  .tree li { display: flex; align-items: center; height: 27px; padding-left: 12px; }
  .tree li .rt { margin-right: 16px; }
  .tree li span { margin-left: 9px; letter-spacing: -.05px; }
  .gal { height: 260px; margin-top: 3px; padding-top: 0; }
  .srow { display: flex; align-items: center; gap: 10px; padding: 2px 3px; }
  .s1 { width: 130px; height: 36px; padding: 0 10px 0 12px; }

  .hbar, .vbar { display: flex; background: #525252; flex: none; }
  .hbar { height: 20px; width: 100%; }
  .vbar { width: 20px; flex-direction: column; }
  .sbtn { flex: none; width: 20px; height: 20px; background: #5f5f5f; border: 1px solid #767676; display: grid; place-items: center; }
  .track { flex: 1; min-width: 0; min-height: 0; }
  .thumb { background: linear-gradient(#6b6b6b, #626262); border: 1px solid #7c7c7c; height: 100%; }
  .hrow { display: flex; }

  .center { background: #323232; border-top: 2px solid #6e6e6e; overflow: hidden; }
  .tabs { height: 39px; display: flex; align-items: flex-end; gap: 2px; padding-left: 1px; border-bottom: 3px solid #5c5c5c; }
  .tab { width: 107px; height: 32px; background: #363636; border: 1px solid #4c4c4c; border-bottom: 0; display: flex; align-items: center; gap: 17px; padding: 2px 0 0 15px; border-radius: 3px 3px 0 0; letter-spacing: 0; }
  .tab.main { width: 110px; height: 37px; margin-bottom: -2px; background: linear-gradient(#6a6a6a, #5e5e5e); border-color: #777; padding: 0 0 1px 16px; gap: 18px; }
  .canvasbox { display: grid; grid-template-columns: 1586px 20px; grid-template-rows: 478px 20px; padding: 1px 0 0 2px; border-left: 2px solid #555; }
  .canvas { position: relative; overflow: hidden; background: #232323; font-size: 9.300px; line-height: 12px; letter-spacing: -.1px; }
  .wires { position: absolute; left: 0; top: 0; }
  .bm { position: absolute; border-radius: 4px 4px 3px 3px; overflow: hidden; font-weight: 600; font-size: 9.300px; letter-spacing: -.25px; }
  .bm div { height: 14px; line-height: 14px; display: flex; align-items: center; gap: 7px; padding-left: 7px; }
  .blue { left: 61px; top: 150px; width: 730px; height: 105px; background: #1e2039; border: 1px solid #1a1a4e; }
  .blue div { background: #021fa2; }
  .steel { left: 57px; top: 286px; width: 1012px; height: 200px; background: #242b31; }
  .steel div { background: #2c5379; }
  .note { position: absolute; left: 210px; top: 311px; width: 78px; height: 74px; background: #2b4d72ee; border: 1px solid #2e5a8a; border-radius: 3px; white-space: normal; padding: 7px 18px 0 7px; line-height: 12px; font-size: 9.300px; }
  .pt { display: block; flex: none; width: 0; height: 0; border: 4px solid transparent; border-left: 7px solid #fff; border-right: 0; }
  .chev, .eye { flex: none; }
  .src { position: absolute; background: #ab5a28; border: 1px solid #b8683a; border-radius: 3px; display: flex; font-size: 9.800px; overflow: hidden; }
  .src b { font-weight: 600; flex: 1; margin-left: 4px; letter-spacing: -.35px; }
  .lay { flex: none; width: 17px; background: #6e3817; display: grid; place-items: center; }
  .srow1 { flex: 1; display: flex; align-items: center; height: 14px; padding: 0 2px 0 4px; }
  .srow1 .pt { margin-left: 6px; }
  .wide { left: 68px; top: 197px; width: 248px; height: 16px; }
  .dcoup { left: 76.500px; top: 327px; width: 104px; height: 45px; }
  .dcoup .srow1 { height: 15px; flex: none; }
  .csv { left: 76.500px; top: 410.500px; width: 104px; height: 16px; }
  .scol { flex: 1; display: flex; flex-direction: column; }
  .attr { flex: 1; background: #3d3d3a; border-top: 1px solid #9a5a30; padding-left: 15px; font-size: 8.500px; line-height: 13px; }
  .node { position: absolute; background: #2b527a; border: 1px solid #264b70; border-radius: 3px; display: flex; flex-direction: column; overflow: hidden; }
  .nh { flex: none; background: #20364e; font-size: 9.700px; font-weight: 600; letter-spacing: -.35px; line-height: 16px; padding-left: 2px; color: #fff; }
  .np { flex: 1; display: flex; align-items: center; border-top: 1px solid #20415f; padding: 0 3px 0 4px; font-size: 8.900px; color: #dfe7ee; min-height: 0; }
  .np span { flex: 1; margin-left: 4px; }
  .np .chev { margin-right: 1px; }
  .np .eye + .pt { margin-left: 6px; }
  .np .eye + svg { margin-left: 5px; }
  .sel.node { border: 2.500px solid #4868e4; border-radius: 5px; }
  .logn .np { margin-right: 18px; }
  .logn .nh { margin-right: 18px; }
  .logside { position: absolute; right: 0; top: 0; width: 17px; height: 100%; background: #0e1a28; padding: 17px 1px 0 2px; display: flex; flex-direction: column; gap: 1px; }
  .logside i { height: 1.600px; background: #cfd4d8; }
  .logside i:last-child { width: 9px; }
  .nodebar { position: absolute; left: 1140px; top: 149px; width: 134px; height: 24px; background: #191919; border: 1px solid #2d2d2d; padding: 3px 4px; }
  .cnt { position: absolute; transform: translate(-50%, -50%); font-size: 9.800px; color: #fff; letter-spacing: -.35px; }

  .fi { width: 209px; padding-left: 12px; gap: 13px; border-right: 2px solid #7a7a7a; }
  .selrow { display: flex; align-items: center; height: 33px; margin-top: 15px; padding-left: 13px; }
  .s-a { width: 154px; letter-spacing: -.1px; }
  .one { width: 27px; height: 31px; border: 2px solid #262626; border-radius: 3px; text-align: center; line-height: 28px; color: #555; background: #2e2e2e; }
  .s-b { width: 55px; margin-left: 9px; }
  .selrow .lf, .selrow .rt { border-left-color: transparent; border-right-color: transparent; margin-bottom: 5px; }
  .selrow .lf { border-right-color: #6e6e6e; }
  .selrow .rt { border-left-color: #6e6e6e; margin-left: 30px; }
  .s-c { width: 33px; margin-left: 24px; }
  .ptable { display: grid; grid-template-columns: 459px 20px; grid-template-rows: 371px 20px; margin: 11px 0 0 14px; background: #262626; width: 480px; }
  .pt-main { overflow: hidden; display: flex; flex-direction: column; }
  .prow { flex: none; display: flex; height: 24px; line-height: 25px; background: #282828; }
  .prow.alt { background: #323232; }
  .prow .c1 { width: 197px; padding-left: 65px; flex: none; letter-spacing: -.2px; }
  .prow .c2 { width: 150px; flex: none; letter-spacing: -.2px; }
  .prow .c3 { letter-spacing: 0; }
  .head { height: 28px; line-height: 30px; background: linear-gradient(#505050, #404040); margin-bottom: 2px; }
  .prow.head .c1 { width: 191px; padding-left: 3px; border-right: 2px solid #6a6a6a; letter-spacing: 0; }
  .prow.head .c2 { width: 149px; padding-left: 6px; border-right: 2px solid #6a6a6a; display: flex; justify-content: space-between; align-items: center; padding-right: 5px; }
  .prow.head .c3 { padding-left: 5px; }
  .pbody { flex: 1; overflow: hidden; }
  .grp { align-items: center; padding-left: 9px; }
  .grp .dn { margin-right: 9px; }
  .grp b { width: 93px; margin-left: 9px; letter-spacing: .1px; }
  .inf { width: 23px; height: 23px; border-radius: 50%; background: #04829e; border: 2px solid #e4f2f4; text-align: center; font: 700 15px/19px 'Liberation Serif', serif; margin-left: 13px; color: #fff; }
  .fsearch { display: flex; align-items: center; gap: 9px; margin: 11px 0 0 14px; }
  .f1 { width: 288px; height: 36px; padding: 0 9px 0 10px; }
  .f2 { width: 129px; height: 34px; padding: 0 10px 0 6px; }

  .low { flex: none; background: #323232; height: 34px; }
  .vp { width: 163px; padding-left: 12px; gap: 12px; border-right: 1px solid #777; }
  .vp span { letter-spacing: -.12px; }
  .tl { width: 147px; padding-left: 13px; line-height: 31px; border-right: 2px solid #6b6b6b; letter-spacing: -.18px; }

  .preview { flex: none; height: 671px; display: flex; position: relative; border-bottom: 2px solid #3e3e3e; }
  .side { width: 57px; flex: none; padding-left: 7px; }
  .si { width: 33px; height: 33px; display: grid; place-items: center; }
  .si.a { margin-top: 5px; }
  .si.b { margin-bottom: 4px; }
  .si.sel { background: #5c5c5c; border: 1px solid #747474; border-radius: 3px; margin-bottom: 3px; }
  hr { width: 18px; height: 3px; margin: 6px 0 4px 7px; border: 0; background: #666; }
  hr.h2 { margin: 4px 0 5px 7px; }
  .lbl { height: 28px; line-height: 28px; }
  .group { border: 2px solid #3b3b3b; border-radius: 4px; height: 641px; }
  .tcol { width: 1496px; flex: none; }
  .tgroup { margin-left: 3px; padding: 10px 0 0 8px; }
  .trow1 { display: flex; gap: 12px; height: 46px; }
  .src1 { width: 1341px; height: 37px; padding: 0 9px 0 3px; }
  .src1 span { letter-spacing: -.2px; }
  .btn { width: 117px; height: 36px; background: linear-gradient(#757575, #606060); border: 1px solid #808080; border-radius: 3px; text-align: center; line-height: 36px; }
  .grid { display: grid; grid-template-columns: 1448px 20px; grid-template-rows: 505px 20px; margin-left: 1px; width: 1468px; }
  .gmain { overflow: hidden; display: flex; flex-direction: column; }
  .gr { display: grid; grid-template-columns: 47px 150px 150px 150px 150px 183px 328px 290px; height: 30px; background: #282828; flex: none; }
  .gr.alt { background: #323232; }
  .gr span { border-right: 1.500px solid #666; border-bottom: 1px solid #666; padding: 0 4px 0 5px; line-height: 30px; overflow: hidden; letter-spacing: -.03px; }
  .gr span:last-child { border-right: 0; }
  .gr .n { text-align: right; }
  .gr .nom { letter-spacing: .2px; padding-right: 0; }
  .gr .rh, .gh span { font-weight: 700; background: linear-gradient(#505050, #404040); }
  .gr .rh { padding-left: 2px; border-bottom: 2px solid #222; border-right-color: #2a2a2a; line-height: 31px; }
  .gr.gh { height: 29px; border-bottom: 1px solid #262626; }
  .gr.gh span { border-bottom: 0; border-color: #606060; line-height: 31px; padding: 0 0 0 4px; letter-spacing: -.1px; }
  .gr.gh span:first-child { border: 0; }
  .gbody { flex: 1; overflow: hidden; }
  .tsearch { display: flex; align-items: center; gap: 10px; margin-top: 12px; }
  .g1 { width: 347px; height: 35px; padding: 0 9px 0 10px; }
  .g2 { width: 349px; height: 35px; padding: 0 9px 0 5px; }
  .split { width: 5px; height: 27px; flex: none; margin-top: 326px; background: repeating-linear-gradient(#777 0 3px, transparent 3px 6px) 3px 0 / 2.500px 27px no-repeat; }
  .gcol { flex: 1; }
  .ggroup { margin-left: 3px; padding: 14px 0 0 12px; }
  .mtools { display: flex; height: 74px; }
  .mtools .tool { height: 62px; padding-top: 2px; }
  .mtools .tool span { margin-top: 6px; }
  .mtools .tsep { padding: 7px 0 9px; height: 62px; }
  .mtools .tsep i { width: 2px; }
  .mtools .more { padding: 12px 0 0 91px; }
  .map { position: relative; width: 713px; height: 489px; overflow: hidden; outline: 2px solid #4e4e4e; }
  .map svg { display: block; }
  .credit { position: absolute; left: 6px; top: 436px; width: 533px; height: 39px; background: #222222b4; display: flex; align-items: center; gap: 6px; padding: 3px 0 0 8px; letter-spacing: 0; }
  .credit u { color: #2c8cf0; }
  .coords { display: flex; align-items: center; height: 36px; margin-top: 12px; padding-left: 47px; letter-spacing: -.1px; }
  .cx { width: 30px; } .cxv { width: 132px; } .cy { width: 28px; } .cyv { width: 121px; }
  .merc { width: 229px; height: 36px; padding: 0 9px 0 4px; letter-spacing: -.28px; }
  .uu { margin-left: 9px; letter-spacing: -.15px; }
  .highlight { position: absolute; left: 65px; top: 72px; width: 1500px; height: 550px; border: 6px solid #e51b1b; }

  .status { flex: 1; border-bottom: 2px solid #444; }
  .taskbar { flex: none; height: 17px; background: #212121; }
  .taskbar svg { display: block; }
</style>
